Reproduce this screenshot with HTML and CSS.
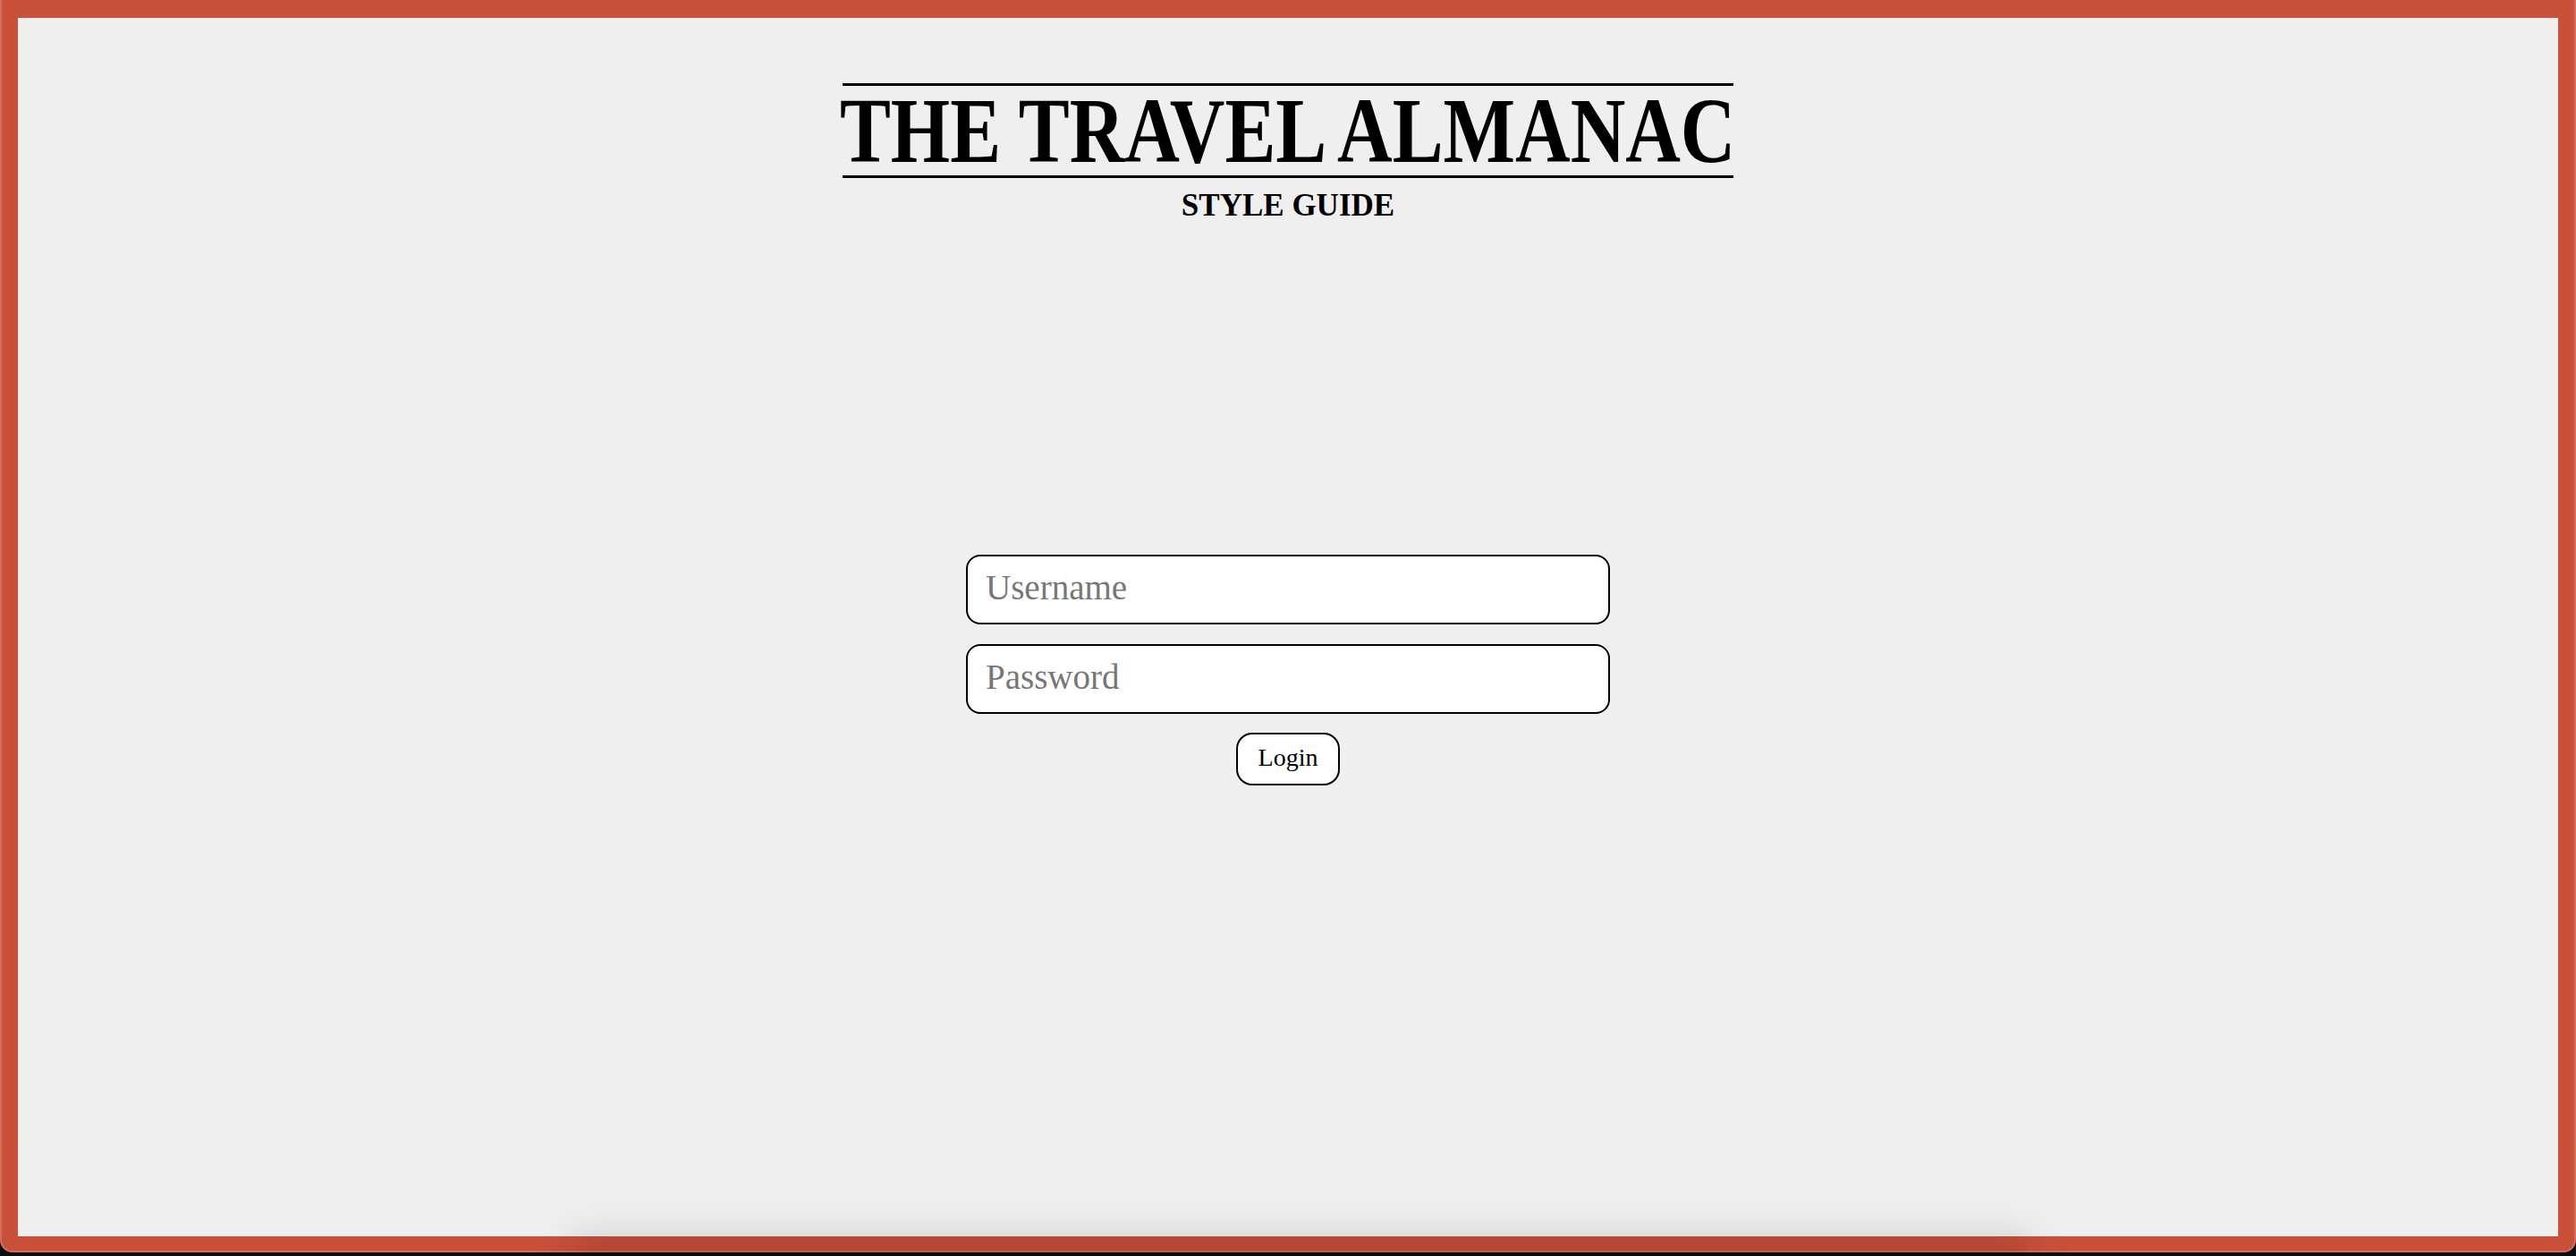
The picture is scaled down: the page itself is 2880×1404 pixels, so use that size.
FILE: index.html
```html
<!DOCTYPE html>
<html lang="en">
<head>
<meta charset="utf-8">
<title>The Travel Almanac — Style Guide</title>
<link rel="stylesheet" href="styles.css">
</head>
<body>
<div class="window">
  <header class="masthead">
    <div class="title-wrap"><h1 class="title">THE TRAVEL ALMANAC</h1></div>
    <p class="subtitle">STYLE GUIDE</p>
  </header>
  <form class="login">
    <input class="field" type="text" placeholder="Username">
    <input class="field" type="password" placeholder="Password">
    <button class="btn" type="button">Login</button>
  </form>
</div>
<div class="dock-area"><div class="dock-shadow"></div></div>
</body>
</html>
```
FILE: styles.css
```css
html, body {
  margin: 0;
  height: 100%;
}
body {
  background: #0c0c14;
  overflow: hidden;
  position: relative;
}
.window {
  box-sizing: border-box;
  height: 1400px;
  border: 20px solid #c9513a;
  border-bottom-width: 18px;
  border-radius: 0 0 14px 14px;
  background: #efefef;
  position: relative;
  display: flex;
  flex-direction: column;
  align-items: center;
}
.window::after {
  content: "";
  position: absolute;
  top: -20px;
  left: -20px;
  right: -20px;
  bottom: -18px;
  border: 2px solid rgba(255, 255, 255, 0.16);
  border-top: none;
  border-radius: 0 0 14px 14px;
  pointer-events: none;
}
.masthead {
  display: flex;
  flex-direction: column;
  align-items: center;
  padding-top: 73px;
}
.title-wrap {
  width: 996px;
  border-top: 3px solid #000;
  border-bottom: 3px solid #000;
  display: flex;
  justify-content: center;
}
.title {
  margin: 0;
  font: 700 104px/100px "Liberation Serif", serif;
  white-space: nowrap;
  color: #000;
  transform: scaleX(0.82);
  transform-origin: center;
}
.subtitle {
  margin: 11px 0 0;
  font: 700 35px/40px "Liberation Serif", serif;
  color: #000;
}
.login {
  margin-top: 370px;
  display: flex;
  flex-direction: column;
  align-items: center;
  gap: 22px;
}
.field {
  box-sizing: border-box;
  width: 720px;
  height: 78px;
  border: 2px solid #000;
  border-radius: 16px;
  background: #fff;
  padding: 0 20px 6px;
  font: 39px "Liberation Serif", serif;
  color: #000;
  outline: none;
}
.field::placeholder {
  color: #777;
}
.btn {
  box-sizing: border-box;
  height: 59px;
  margin-top: -1px;
  padding: 0 23px 3px;
  border: 2px solid #000;
  border-radius: 18px;
  background: #fff;
  font: 28px/52px "Liberation Serif", serif;
  color: #000;
}
.dock-area {
  position: absolute;
  left: 0;
  right: 0;
  bottom: 0;
  height: 140px;
  overflow: hidden;
  pointer-events: none;
}
.dock-shadow {
  position: absolute;
  left: 640px;
  top: 120px;
  width: 1630px;
  height: 100px;
  background: rgba(0, 0, 0, 0.15);
  filter: blur(22px);
}
```
